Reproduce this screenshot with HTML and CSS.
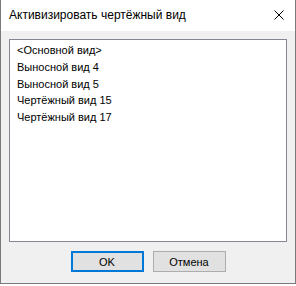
FILE: index.html
```html
<!DOCTYPE html>
<html lang="ru">
<head>
    <meta charset="UTF-8">
    <meta name="viewport" content="width=device-width, initial-scale=1.0">
    <title>Активизировать чертёжный вид</title>
    <link rel="stylesheet" href="styles.css">
</head>
<body>
    <div class="dialog">
        <div class="titlebar">
            <span class="title">Активизировать чертёжный вид</span>
            <button class="close" type="button" aria-label="Закрыть">
                <svg width="10" height="10" viewBox="0 0 10 10">
                    <path d="M0.5 0.5 L9.5 9.5 M9.5 0.5 L0.5 9.5" stroke="#000" stroke-width="1" fill="none"/>
                </svg>
            </button>
        </div>
        <div class="content">
            <ul class="views">
                <li>&lt;Основной вид&gt;</li>
                <li>Выносной вид 4</li>
                <li>Выносной вид 5</li>
                <li>Чертёжный вид 15</li>
                <li>Чертёжный вид 17</li>
            </ul>
            <div class="buttons">
                <button type="button" class="btn default">OK</button>
                <button type="button" class="btn">Отмена</button>
            </div>
        </div>
    </div>
</body>
</html>
```

FILE: styles.css
```css
body {
    margin: 0;
    background-color: #fff;
    font-family: "Liberation Sans", Arial, sans-serif;
}
.dialog {
    width: 296px;
    height: 284px;
    box-sizing: border-box;
    border: 1px solid #7a7a7a;
    border-top: none;
    background-color: #f0f0f0;
}
.titlebar {
    height: 31px;
    background-color: #fff;
    display: flex;
    align-items: center;
    justify-content: space-between;
    padding-left: 8px;
    padding-right: 11px;
}
.title {
    font-size: 12px;
    color: #000;
    margin-top: -1px;
}
.close {
    border: none;
    background: none;
    padding: 0;
    width: 10px;
    height: 10px;
    display: flex;
    margin-top: -1px;
}
.content {
    padding: 8px 8px 0 8px;
}
.views {
    list-style: none;
    margin: 0;
    padding: 2px 0 0 7px;
    width: 278px;
    height: 203px;
    box-sizing: border-box;
    border: 1px solid #828790;
    background-color: #fff;
    font-size: 11px;
    color: #000;
}
.views li {
    height: 16.75px;
    line-height: 16.75px;
}
.buttons {
    display: flex;
    justify-content: center;
    gap: 9px;
    margin-top: 9px;
}
.btn {
    width: 73px;
    height: 21px;
    box-sizing: border-box;
    border: 1px solid #adadad;
    background-color: #e1e1e1;
    font-family: "Liberation Sans", Arial, sans-serif;
    font-size: 11px;
    color: #000;
    padding: 0;
}
.btn.default {
    border: 2px solid #0078d7;
}
```
